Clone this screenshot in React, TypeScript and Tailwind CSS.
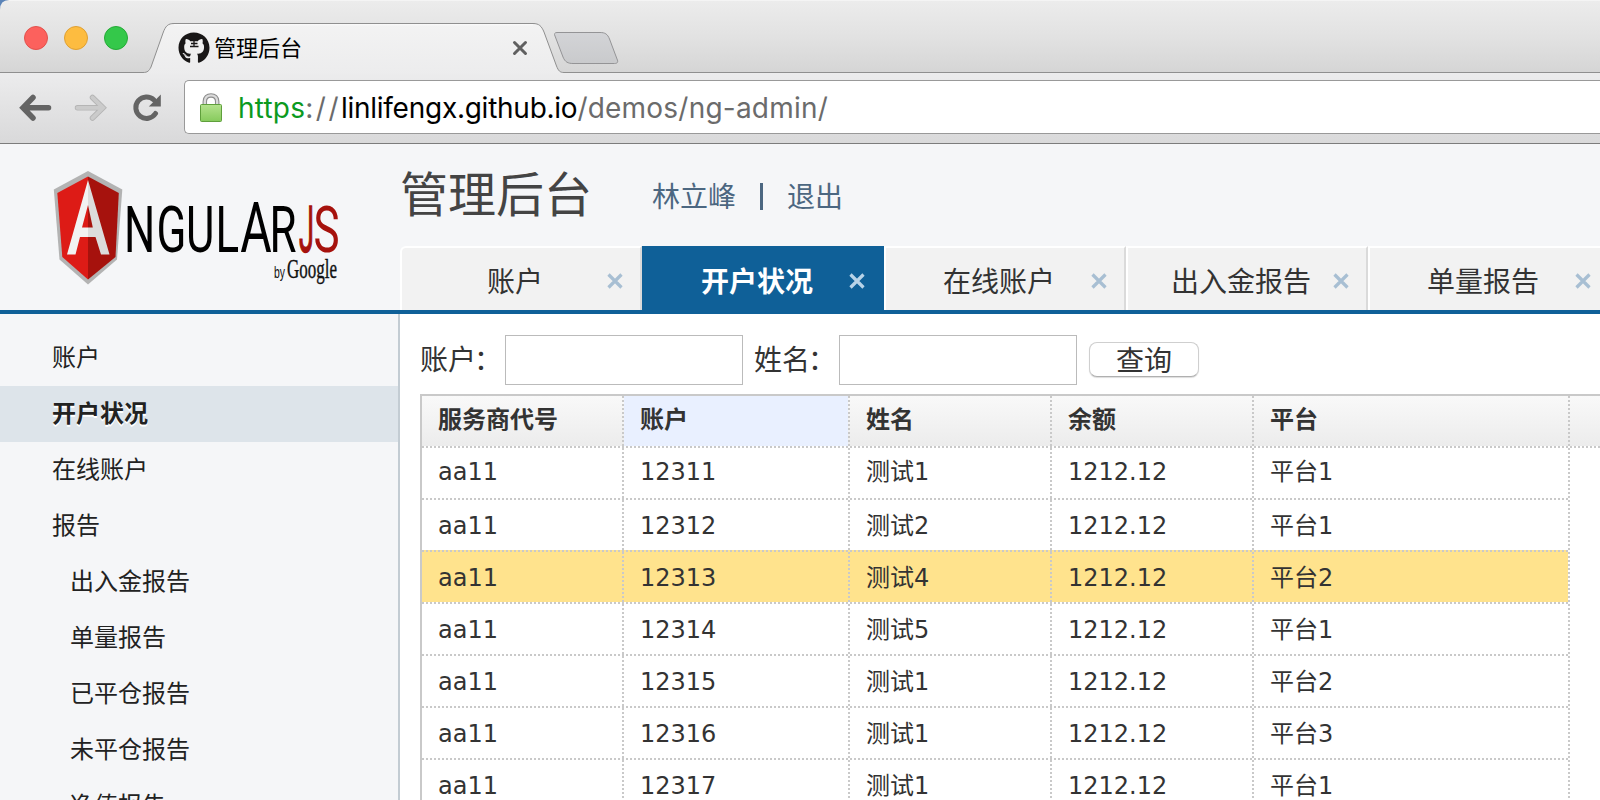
import React from "react";
import { FaGithub } from "react-icons/fa";

const cjk = "font-['Noto_Sans_CJK_SC',sans-serif]";

function WindowChrome() {
  return (
    <div className="relative h-[73px] shrink-0">
      <svg className="absolute inset-0" width="1600" height="73" viewBox="0 0 1600 73">
        <defs>
          <linearGradient id="strip" x1="0" y1="0" x2="0" y2="1">
            <stop offset="0" stopColor="#ececec" />
            <stop offset="0.5" stopColor="#e2e2e2" />
            <stop offset="1" stopColor="#d5d5d5" />
          </linearGradient>
          <linearGradient id="newTab" x1="0" y1="0" x2="0" y2="1">
            <stop offset="0" stopColor="#d3d4d7" />
            <stop offset="1" stopColor="#c9cacc" />
          </linearGradient>
          <linearGradient id="tab" x1="0" y1="0" x2="0" y2="1">
            <stop offset="0" stopColor="#f3f3f3" />
            <stop offset="1" stopColor="#ececed" />
          </linearGradient>
        </defs>
        <rect width="1600" height="73" fill="#5b84b8" />
        <path d="M0 73V10Q0 0 9 0H1600V73Z" fill="url(#strip)" />
        <path d="M9 0.5H1600" stroke="#f4f4f4" />
        <path
          d="M0 72.500H143C147.500 72.500 149 71 151 67L163 33C165.500 26 168 23.500 174 23.500H533C539 23.500 541.500 26 544 32L556.500 66C558.500 71 560 72.500 564 72.500H1600V75H0Z"
          fill="url(#tab)"
          stroke="#8f8f8f"
        />
        <path d="M174 24.800H533" stroke="#fbfbfb" />
        <path
          d="M557 32.500H600C605 32.500 607.500 34 609.500 39L617 59C618.500 62 617.500 63.500 614.500 63.500H573C568 63.500 565 62 563 57L555 36C554 34 554.500 32.500 557 32.500Z"
          fill="url(#newTab)"
          stroke="#949496"
        />
      </svg>
      <div className="relative flex h-full items-start">
        <div className="flex gap-4 pl-6 pt-[26px]">
          <span className="size-6 rounded-full border border-[#e2514c] bg-[#fc615d]" />
          <span className="size-6 rounded-full border border-[#dfa033] bg-[#fdbc40]" />
          <span className="size-6 rounded-full border border-[#24aa36] bg-[#34c84a]" />
        </div>
        <div className="ml-[50px] mt-[24px] flex h-12 w-[350px] items-center">
          <span className="relative size-8 shrink-0">
            <FaGithub className="size-8 text-[#191717]" />
            <svg className="absolute left-0 top-0" width="32" height="32" viewBox="0 0 32 32">
              <path d="M12 8.500H20M13 11.500H19.500M12 14.500H20.500M16 8.500V14.500" stroke="#191717" strokeWidth="1.300" fill="none" />
            </svg>
          </span>
          <span className={`${cjk} -mt-[5px] ml-1 text-[22px] font-normal leading-8 text-black`}>管理后台</span>
          <svg className="ml-auto" width="16" height="16" viewBox="0 0 16 16">
            <path d="M2.500 2.500L13.500 13.500M13.500 2.500L2.500 13.500" stroke="#606060" strokeWidth="3" strokeLinecap="round" />
          </svg>
        </div>
      </div>
    </div>
  );
}

function Toolbar() {
  return (
    <div className="flex h-[71px] shrink-0 items-start border-b border-[#7c7c7c] bg-linear-to-b from-[#ececed] to-[#d9d9da]">
      <div className="flex w-[184px] shrink-0 items-center pl-[19px] pt-[19px]">
        <svg width="34" height="32" viewBox="0 0 34 32" fill="none" stroke="#646464" strokeWidth="5.500" strokeLinecap="round">
          <path d="M5 15.800H29.500M14 5.500L4 15.800L14 26" strokeLinejoin="miter" />
        </svg>
        <svg className="ml-[21px]" width="34" height="32" viewBox="0 0 34 32" fill="none" strokeLinecap="round">
          <path d="M3.500 15.800H28.500M18.500 5.500L29 15.800L18.500 26" stroke="#b5b5b5" strokeWidth="5.500" />
          <path d="M3.500 15.800H28.500M18.500 5.500L29 15.800L18.500 26" stroke="#cbcbcb" strokeWidth="3.800" />
        </svg>
        <svg className="ml-[24px]" width="32" height="32" viewBox="0 0 32 32" fill="none">
          <path d="M23.500 21.500A10.700 10.700 0 1 1 22 8" stroke="#646464" strokeWidth="5" strokeLinecap="round" />
          <path d="M28.800 2.500V14.600H16.800Z" fill="#646464" />
        </svg>
      </div>
      <div className="mt-[7px] flex h-[54px] flex-1 items-center rounded-l-[5px] border border-r-0 border-[#999] bg-white pl-[15px]">
        <svg className="mt-0.5" width="22" height="32" viewBox="0 0 22 32" fill="none">
          <defs>
            <linearGradient id="lock" x1="0" y1="0" x2="0" y2="1">
              <stop offset="0" stopColor="#b4e28d" />
              <stop offset="1" stopColor="#86ca5c" />
            </linearGradient>
          </defs>
          <path d="M4.800 14V9.500C4.800 5.500 7.500 3.400 11 3.400S17.200 5.500 17.200 9.500V14" stroke="#8d8d8d" strokeWidth="4.500" />
          <path d="M4.800 14V9.500C4.800 5.500 7.500 3.400 11 3.400S17.200 5.500 17.200 9.500V14" stroke="#dcdcdc" strokeWidth="2.300" />
          <rect x="0.500" y="12.500" width="21" height="17" rx="1" fill="url(#lock)" stroke="#5f9f3c" />
        </svg>
        <div className="ml-[16px] mt-px whitespace-pre font-['Inter',sans-serif] text-[28px] leading-8 tracking-[0.22px] text-[#6b6b6b]">
          <span className="text-[#0b9a20]">https</span>
          <span className="tracking-[2.5px]">://</span>
          <span className="tracking-[-0.26px] text-black">linlifengx.github.io</span>/demos/ng-admin/
        </div>
      </div>
    </div>
  );
}

function AngularLogo() {
  return (
    <svg className="shrink-0" width="400" height="166" viewBox="0 144 400 166">
      <path d="M88 171L122.300 189.500L117 259.500L88 284.500L59.500 259.500L53.800 189.500Z" fill="#b3b3b3" />
      <path d="M88 176.500L57.300 193L62.300 257L88 279.500Z" fill="#dd1b16" />
      <path d="M88 176.500L118.800 193L115.500 257L88 279.500Z" fill="#a6120d" />
      <path d="M88 180L67 254.500H75.500L80 237H88V227.500H82L88 205Z" fill="#f2f2f2" />
      <path d="M88 180L109.500 254.500H101L95.500 237H88V227.500H92.800L88 205Z" fill="#dcdcdc" />
      <g transform="scale(0.680 1)" className="font-['Roboto',sans-serif]" fontSize="64.500" fill="#000">
        <text y="252" x="182.300 230.300 273.500 316.800">NGUL</text>
        <text y="252" x="353.500" fontSize="71">A</text>
        <text y="252" x="396.200">R</text>
        <text y="252" x="461" fill="#a6120d">S</text>
      </g>
      <g transform="translate(299 0) scale(0.420 1)" className="font-['Roboto',sans-serif]" fontSize="64.500">
        <text y="252" x="0" fill="#a6120d" stroke="#a6120d" strokeWidth="1.500">J</text>
      </g>
      <text x="274" y="278" fontSize="17" textLength="11" lengthAdjust="spacingAndGlyphs" className="font-['Liberation_Sans',sans-serif]" fill="#111">by</text>
      <text x="287" y="278" fontSize="27" textLength="50" lengthAdjust="spacingAndGlyphs" className="font-['Liberation_Serif',serif]" fill="#111" stroke="#111" strokeWidth="0.400">Google</text>
    </svg>
  );
}

const tabs = ["账户", "开户状况", "在线账户", "出入金报告", "单量报告"];

function Cross({ color }: { color: string }) {
  return (
    <svg width="16" height="16" viewBox="0 0 16 16">
      <path d="M1.500 1.500L14.500 14.500M14.500 1.500L1.500 14.500" stroke={color} strokeWidth="3.200" />
    </svg>
  );
}

function Header() {
  return (
    <header className="flex h-[170px] shrink-0 border-b-4 border-[#0f6098] bg-[#f5f6f8]">
      <AngularLogo />
      <div className="flex w-[1210px] shrink-0 flex-col">
        <div className={`${cjk} flex h-[102px] items-center`}>
          <h1 className="-mt-[9px] w-[252px] text-[48px] font-normal leading-none text-[#444]">管理后台</h1>
          <div className="flex items-center text-[28px] leading-none text-[#4c6781]">
            <span>林立峰</span>
            <span className="mx-[24px] mt-0.5 h-[27px] w-[3px] bg-[#4c6781]" />
            <span>退出</span>
          </div>
        </div>
        <nav className="flex h-16">
          {tabs.map((t, i) => (
            <div
              key={t}
              className={
                i === 1
                  ? "relative flex w-[242px] items-center bg-[#0f6098] font-bold text-white"
                  : "relative flex w-[242px] items-center border-t-2 border-r-2 border-l-2 border-t-white border-r-[#dadada] border-l-white bg-[#f2f2f2] text-[#333] first:rounded-tl-md"
              }
            >
              <span className={`${cjk} ${i === 1 ? "pt-[3px]" : "pt-px"} flex-1 pr-3 text-center text-[28px] leading-none`}>{t}</span>
              <span className={i === 1 ? "absolute right-[19px] top-[27px]" : "absolute right-[17px] top-[25px]"}>
                <Cross color={i === 1 ? "#b8d3e8" : "#a8bfd3"} />
              </span>
            </div>
          ))}
        </nav>
      </div>
    </header>
  );
}

const menu: [string, boolean][] = [
  ["账户", false],
  ["开户状况", false],
  ["在线账户", false],
  ["报告", false],
  ["出入金报告", true],
  ["单量报告", true],
  ["已平仓报告", true],
  ["未平仓报告", true],
  ["净值报告", true],
];

function Sidebar() {
  return (
    <aside className={`${cjk} w-[400px] shrink-0 overflow-hidden border-r-2 border-[#c3ccd3] bg-[#f5f6f8] pt-4 text-2xl text-[#222]`}>
      {menu.map(([label, sub], i) => (
        <div
          key={label}
          className={
            i === 1
              ? "flex h-14 items-center bg-[#dde4ea] pb-1 pl-[52px] font-bold [text-shadow:0_2px_0_#fff]"
              : sub
                ? "flex h-14 items-center pb-1 pl-[70px]"
                : "flex h-14 items-center pb-1 pl-[52px]"
          }
        >
          {label}
        </div>
      ))}
    </aside>
  );
}

const cols = ["w-[202px]", "w-[226px]", "w-[202px]", "w-[202px]", "w-[316px]"];
const heads = ["服务商代号", "账户", "姓名", "余额", "平台"];
const rows = [
  ["aa11", "12311", "测试1", "1212.12", "平台1"],
  ["aa11", "12312", "测试2", "1212.12", "平台1"],
  ["aa11", "12313", "测试4", "1212.12", "平台2"],
  ["aa11", "12314", "测试5", "1212.12", "平台1"],
  ["aa11", "12315", "测试1", "1212.12", "平台2"],
  ["aa11", "12316", "测试1", "1212.12", "平台3"],
  ["aa11", "12317", "测试1", "1212.12", "平台1"],
];

const dotsX = "h-0.5 bg-[repeating-linear-gradient(90deg,#c9c9c9_0_2px,transparent_2px_4px)]";
const dotsY = "w-0.5 shrink-0 self-stretch bg-[repeating-linear-gradient(180deg,#c9c9c9_0_2px,transparent_2px_4px)]";

function DataTable() {
  return (
    <div className="mt-[9px] flex w-[1200px] flex-col border-l-2 border-t-2 border-[#c9c9c9] font-['DejaVu_Sans','Noto_Sans_CJK_SC',sans-serif] text-2xl text-[#333]">
      <div className="flex h-[50px] bg-linear-to-b from-[#f9f9f9] to-[#ececec]">
        {heads.map((h, i) => (
          <div key={h} className={`${cols[i]} flex`}>
            <div className={`${cjk} ${i === 1 ? "bg-[#e9f0ff]" : ""} flex flex-1 items-center pb-1.5 pl-4 font-bold`}>{h}</div>
            <div className={dotsY} />
          </div>
        ))}
      </div>
      {rows.map((r, ri) => (
        <div key={r[1]} className={`${ri === 0 ? "w-full" : "w-[1148px]"} flex flex-col`}>
          <div className={ri === 2 ? "mr-0.5 bg-[#ffe38d]" : ""}>
            <div className={dotsX} />
          </div>
          <div className="flex h-[50px]">
            {r.map((c, i) => (
              <div key={i} className={`${cols[i]} ${ri === 2 && i < 4 ? "bg-[#ffe38d]" : ""} flex`}>
                <div className={`${ri === 2 ? "bg-[#ffe38d]" : ""} ${ri === 0 ? "pb-[3px]" : "pt-px"} flex flex-1 items-center pl-4 leading-none`}>{c}</div>
                <div className={dotsY} />
              </div>
            ))}
          </div>
        </div>
      ))}
    </div>
  );
}

function Content() {
  return (
    <main className="w-[1200px] overflow-hidden bg-white pl-5 pt-[21px]">
      <div className={`${cjk} flex h-[50px] items-center text-[28px] leading-none text-[#333]`}>
        <span className="-mt-[5px] w-[85px] shrink-0 whitespace-nowrap">
          账户<span className="-ml-0.5">：</span>
        </span>
        <input className="h-[50px] w-[238px] shrink-0 border border-[#bbb] bg-white outline-none" />
        <span className="-mt-[5px] ml-[11px] w-[85px] shrink-0 whitespace-nowrap">
          姓名<span className="-ml-0.5">：</span>
        </span>
        <input className="h-[50px] w-[238px] shrink-0 border border-[#bbb] bg-white outline-none" />
        <button className="-mt-px ml-3 flex h-[35px] w-[110px] shrink-0 items-center justify-center rounded-lg border border-[#cfcfcf] border-b-[#b0b0b0] bg-white pb-0.5 shadow-[0_1px_1px_#ddd]">
          查询
        </button>
      </div>
      <DataTable />
    </main>
  );
}

export default function App() {
  return (
    <div className="flex h-[800px] w-[1600px] flex-col overflow-hidden">
      <WindowChrome />
      <Toolbar />
      <Header />
      <div className="flex min-h-0 flex-1">
        <Sidebar />
        <Content />
      </div>
    </div>
  );
}
